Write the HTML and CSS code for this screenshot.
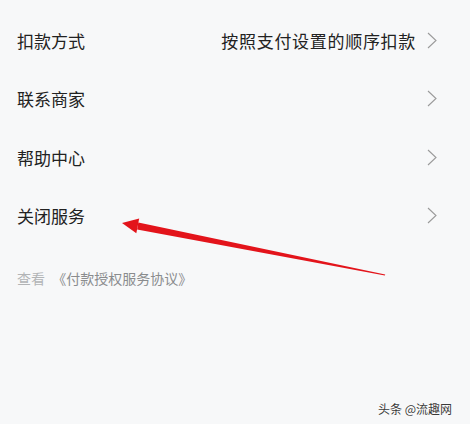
FILE: index.html
```html
<!DOCTYPE html>
<html lang="zh-CN">
<head>
    <meta charset="UTF-8">
    <meta name="viewport" content="width=device-width, initial-scale=1.0">
    <title>服务设置</title>
    <link rel="stylesheet" href="styles.css">
</head>
<body>
    <div class="page">
        <ul class="menu">
            <li class="menu-item">
                <span class="label">扣款方式</span>
                <span class="value">按照支付设置的顺序扣款</span>
                <svg class="chevron" viewBox="0 0 10 17"><polyline points="1,1 9,8.5 1,16"/></svg>
            </li>
            <li class="menu-item">
                <span class="label">联系商家</span>
                <svg class="chevron" viewBox="0 0 10 17"><polyline points="1,1 9,8.5 1,16"/></svg>
            </li>
            <li class="menu-item">
                <span class="label">帮助中心</span>
                <svg class="chevron" viewBox="0 0 10 17"><polyline points="1,1 9,8.5 1,16"/></svg>
            </li>
            <li class="menu-item">
                <span class="label">关闭服务</span>
                <svg class="chevron" viewBox="0 0 10 17"><polyline points="1,1 9,8.5 1,16"/></svg>
            </li>
        </ul>

        <p class="agreement">
            <span class="muted">查看</span>
            <a class="link" href="#">《付款授权服务协议》</a>
        </p>

        <!-- red annotation arrow drawn on top of the screenshot -->
        <svg class="annotation" viewBox="0 0 470 424">
            <polygon class="shaft" points="138.3,222.6 137.1,229.6 384.9,275.6 385.2,274.4"/>
            <polygon class="head" points="122,223 139.2,218.6 136.3,233.2"/>
        </svg>

        <div class="watermark">头条 @流趣网</div>
    </div>
</body>
</html>
```

FILE: styles.css
```css
body {
    margin: 0;
    background-color: #f7f8f9;
    font-family: "Noto Sans CJK SC", "Noto Sans", sans-serif;
    color: #222;
}
.page {
    position: relative;
    width: 470px;
    height: 424px;
    overflow: hidden;
}
.menu {
    list-style: none;
    margin: 0;
    padding: 11px 0 0 0;
}
.menu-item {
    display: flex;
    align-items: center;
    height: 58.5px;
    padding: 0 33px 0 17px;
    font-size: 17px;
}
.label {
    flex: 1;
}
.value {
    letter-spacing: 0.7px;
    margin-right: 11px;
}
.chevron {
    width: 10px;
    height: 17px;
}
.chevron polyline {
    fill: none;
    stroke: #9a9a9a;
    stroke-width: 1.1;
}

.agreement {
    margin: 23px 0 0 17px;
    font-size: 14px;
    line-height: 20px;
}
.muted {
    color: #b2b4b6;
    margin-right: 4px;
}
.link {
    color: #8a8c8e;
    text-decoration: none;
}

/* Overlays */
.annotation {
    position: absolute;
    top: 0;
    left: 0;
    width: 470px;
    height: 424px;
    pointer-events: none;
}
.shaft,
.head {
    fill: #e3141b;
}
.watermark {
    position: absolute;
    right: 18px;
    bottom: 7px;
    font-size: 12px;
    color: #3a3a3a;
    text-shadow: 0 0 2px #fff, 0 0 1px #fff;
}
```
